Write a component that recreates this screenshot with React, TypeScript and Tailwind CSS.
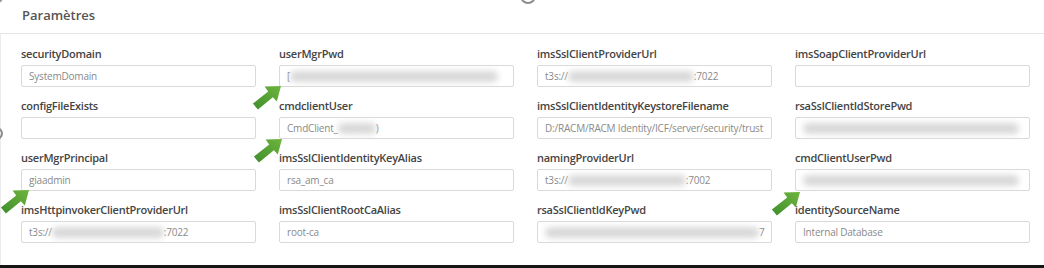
import React from 'react';

type Part = { text?: string; blur?: number };

type Field = {
  label: string;
  value: Part[];
};

const columns: Field[][] = [
  [
    { label: 'securityDomain', value: [{ text: 'SystemDomain' }] },
    { label: 'configFileExists', value: [] },
    { label: 'userMgrPrincipal', value: [{ text: 'giaadmin' }] },
    {
      label: 'imsHttpinvokerClientProviderUrl',
      value: [{ text: 't3s://' }, { blur: 112 }, { text: ':7022' }],
    },
  ],
  [
    { label: 'userMgrPwd', value: [{ text: '[' }, { blur: 208 }] },
    { label: 'cmdclientUser', value: [{ text: 'CmdClient_' }, { blur: 38 }, { text: ')' }] },
    { label: 'imsSslClientIdentityKeyAlias', value: [{ text: 'rsa_am_ca' }] },
    { label: 'imsSslClientRootCaAlias', value: [{ text: 'root-ca' }] },
  ],
  [
    {
      label: 'imsSslClientProviderUrl',
      value: [{ text: 't3s://' }, { blur: 126 }, { text: ':7022' }],
    },
    {
      label: 'imsSslClientIdentityKeystoreFilename',
      value: [{ text: 'D:/RACM/RACM Identity/ICF/server/security/trust' }],
    },
    {
      label: 'namingProviderUrl',
      value: [{ text: 't3s://' }, { blur: 118 }, { text: ':7002' }],
    },
    { label: 'rsaSslClientIdKeyPwd', value: [{ blur: 214 }, { text: '7' }] },
  ],
  [
    { label: 'imsSoapClientProviderUrl', value: [] },
    { label: 'rsaSslClientIdStorePwd', value: [{ blur: 216 }] },
    { label: 'cmdClientUserPwd', value: [{ blur: 216 }] },
    { label: 'identitySourceName', value: [{ text: 'Internal Database' }] },
  ],
];

// green hint arrows pasted over the screenshot, tip at (36,4) of the box
const arrows = [
  { left: 'left-[245px]', top: 'top-[82px]' },
  { left: 'left-[246px]', top: 'top-[135px]' },
  { left: 'left-[-7px]', top: 'top-[186px]' },
  { left: 'left-[764px]', top: 'top-[188px]' },
];

function Arrow({ className }: { className: string }) {
  return (
    <svg className={`absolute ${className}`} width="40" height="30" viewBox="0 0 40 30">
      <defs>
        <linearGradient id="arrowFill" x1="0" y1="1" x2="1" y2="0">
          <stop offset="0" stopColor="#3f8f2c" />
          <stop offset="1" stopColor="#6fb43e" />
        </linearGradient>
      </defs>
      <polygon
        points="7.9,21.6 23.2,9.4 19.6,4.6 36,4 31.8,19.6 27.9,15.2 12.9,27.4"
        fill="url(#arrowFill)"
      />
    </svg>
  );
}

function FieldBox({ field }: { field: Field }) {
  return (
    <div className="flex flex-col">
      <label className="h-[14px] mb-[4px] text-[11px] leading-[14px] font-semibold text-[#444] tracking-[-0.25px] whitespace-nowrap">
        {field.label}
      </label>
      <div className="h-[22px] border border-[#d9d9d9] rounded-[2px] bg-white px-[7px] flex items-center overflow-hidden whitespace-nowrap text-[10px] text-[#8a8a8a] tracking-[-0.2px]">
        {field.value.map((p, i) =>
          p.blur ? (
            <span
              key={i}
              className="inline-block h-[11px] bg-[#d8d8d8] blur-[3px] rounded-full shrink-0"
              style={{ width: p.blur }}
            />
          ) : (
            <span key={i} className="shrink-0">
              {p.text}
            </span>
          ),
        )}
      </div>
    </div>
  );
}

export default function App() {
  return (
    <div className="relative w-[1044px] h-[268px] overflow-hidden bg-white flex flex-col font-['Open_Sans',sans-serif]">
      <div className="h-[34px] shrink-0 pl-[22px] flex items-center border-b border-[#e6e6e6]">
        <h2 className="text-[13px] font-semibold text-[#555] pb-[2px]">Paramètres</h2>
      </div>

      <div className="flex-1 pl-[20px] pt-[13px] grid grid-cols-[235px_235px_235px_235px] gap-x-[23px] border-l border-[#ececec]">
        {columns.map((col, ci) => (
          <div key={ci} className="flex flex-col gap-y-[12px]">
            {col.map((f) => (
              <FieldBox key={f.label} field={f} />
            ))}
          </div>
        ))}
      </div>

      <div className="h-[3px] shrink-0 bg-[#161616]" />

      {arrows.map((a, i) => (
        <Arrow key={i} className={`${a.left} ${a.top}`} />
      ))}

      {/* cut-off stepper circles at the edges */}
      <div className="absolute left-[520px] top-[-12px] w-[16px] h-[16px] rounded-full border-2 border-[#8c8c8c]" />
      <div className="absolute left-[-10px] top-[127px] w-[13px] h-[13px] rounded-full border-2 border-[#8c8c8c]" />
      <div className="absolute left-[-8px] top-[-8px] w-[11px] h-[11px] rounded-full border-2 border-[#9a9a9a]" />
    </div>
  );
}
